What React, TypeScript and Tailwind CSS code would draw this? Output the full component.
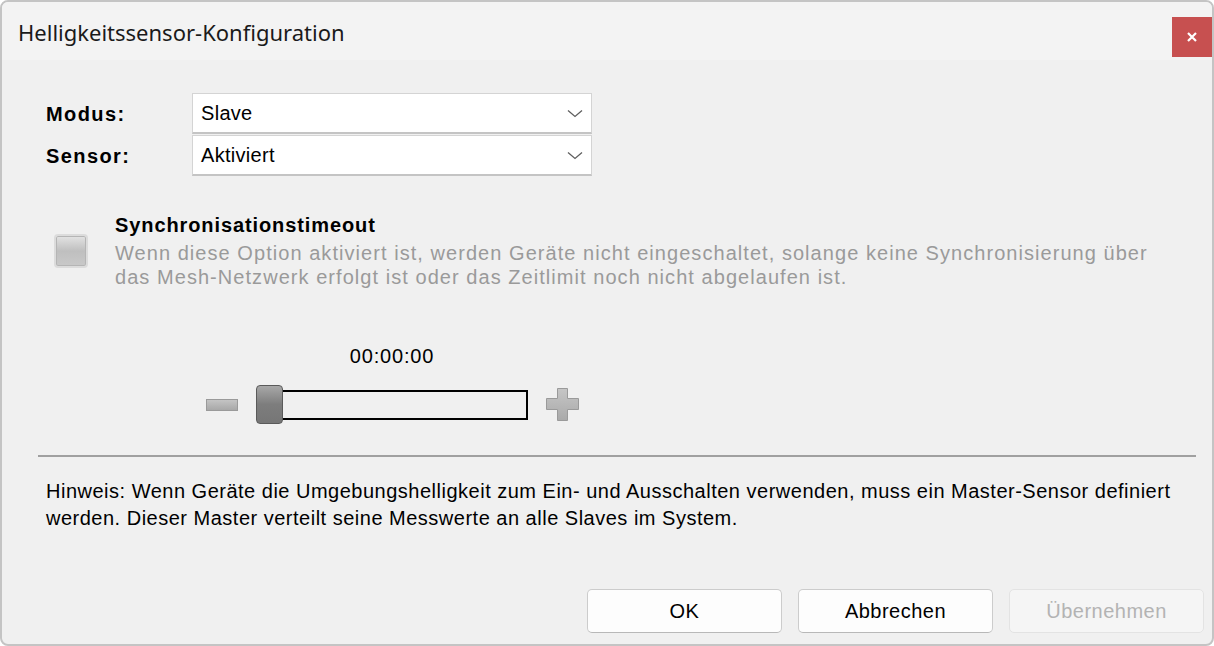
import { useState } from 'react';

const body = { fontFamily: '"Liberation Sans", Arial, sans-serif' };
const title = { fontFamily: '"Noto Sans", "Open Sans", sans-serif' };

function Chevron() {
  return (
    <svg width="16" height="9" viewBox="0 0 16 9" fill="none" stroke="#5f5f5f" strokeWidth="1.3">
      <path d="M1 1.5L8 7.5L15 1.5" />
    </svg>
  );
}

function Select({ value }: { value: string }) {
  return (
    <div className="flex h-[41px] w-[400px] items-center justify-between border border-[#d4d4d4] border-b-2 border-b-[#c4c4c4] bg-white pl-[8px] pr-[8px] text-[20px] tracking-[0.3px] text-black">
      <span>{value}</span>
      <Chevron />
    </div>
  );
}

function Button({ label, disabled }: { label: string; disabled?: boolean }) {
  return (
    <button
      className={
        disabled
          ? 'h-[44px] w-[195px] rounded-[5px] border border-[#e3e3e3] bg-[#f5f5f5] text-[20px] tracking-[0.5px] text-[#b3b3b3]'
          : 'h-[44px] w-[195px] rounded-[5px] border border-[#cccccc] border-b-[#b8b8b8] bg-[#fdfdfd] text-[20px] tracking-[0.5px] text-black'
      }
    >
      {label}
    </button>
  );
}

function PlusIcon() {
  return (
    <svg width="33" height="33" viewBox="0 0 33 33">
      <defs>
        <linearGradient id="plusFill" x1="0" y1="0" x2="0" y2="1">
          <stop offset="0" stopColor="#c6c6c6" />
          <stop offset="1" stopColor="#a9a9a9" />
        </linearGradient>
      </defs>
      <path
        d="M11.5 0.5H21.5V10.5H32.5V21.5H21.5V32.5H11.5V21.5H0.5V10.5H11.5Z"
        fill="url(#plusFill)"
        stroke="#9a9a9a"
        strokeWidth="1"
      />
    </svg>
  );
}

export default function App() {
  const [checked] = useState(false);

  return (
    <div className="h-[646px] w-[1214px] bg-white" style={body}>
      <div className="flex h-full flex-col overflow-hidden rounded-[8px] border-2 border-[#c4c4c4] bg-[#f0f0f0]">
        {/* title bar */}
        <div className="flex h-[58px] shrink-0 items-start justify-between bg-[#f3f3f3]">
          <div className="mt-[15px] pl-[16px] text-[22px] leading-[30px] text-[#1a1a1a]" style={title}>
            Helligkeitssensor-Konfiguration
          </div>
          <button className="mt-[15px] flex h-[40px] w-[40px] items-center justify-center bg-[#c75050] text-white">
            <svg width="12" height="12" viewBox="0 0 12 12" stroke="white" strokeWidth="2.2">
              <path d="M2 2L10 10M10 2L2 10" />
            </svg>
          </button>
        </div>

        {/* form */}
        <div className="mt-[33px] flex flex-col gap-[1px] pl-[44px]">
          <div className="flex items-center">
            <span className="w-[146px] text-[20px] font-bold tracking-[1.4px] text-black">Modus:</span>
            <Select value="Slave" />
          </div>
          <div className="flex items-center">
            <span className="w-[146px] text-[20px] font-bold tracking-[1.4px] text-black">Sensor:</span>
            <Select value="Aktiviert" />
          </div>
        </div>

        {/* sync timeout */}
        <div className="mt-[37px] flex items-center pl-[52px]">
          <div className="mr-[27px] h-[34px] w-[34px] rounded-[4px] border-2 border-[#dcdcdc] bg-gradient-to-b from-[#e4e4e4] via-[#bfbfbf] to-[#c9c9c9] shadow-[inset_0_0_0_1px_#b5b5b5]">
            {checked && <span />}
          </div>
          <div className="flex flex-col">
            <div className="text-[20px] font-bold leading-[24px] tracking-[0.9px] text-black">Synchronisationstimeout</div>
            <p className="mt-[4px] w-[1060px] text-[20px] leading-[24px] tracking-[1.05px] text-[#9a9a9a]">
              Wenn diese Option aktiviert ist, werden Geräte nicht eingeschaltet, solange keine Synchronisierung über das
              Mesh-Netzwerk erfolgt ist oder das Zeitlimit noch nicht abgelaufen ist.
            </p>
          </div>
        </div>

        {/* slider */}
        <div className="mt-[56px] flex w-[780px] flex-col items-center">
          <div className="text-[20px] leading-[22px] tracking-[0.8px] text-black">00:00:00</div>
          <div className="mt-[18px] flex items-center">
            <div className="h-[12px] w-[32px] border border-[#9a9a9a] bg-gradient-to-b from-[#c4c4c4] to-[#a8a8a8]" />
            <div className="ml-[18px] flex h-[39px] w-[272px] items-center">
              <div className="h-[39px] w-[27px] rounded-[4px] border border-[#5a5a5a] bg-gradient-to-b from-[#a8a8a8] via-[#7d7d7d] to-[#767676]" />
              <div className="h-[30px] flex-1 border-2 border-l-0 border-black bg-[#f0f0f0]" />
            </div>
            <div className="ml-[18px]">
              <PlusIcon />
            </div>
          </div>
        </div>

        {/* separator */}
        <div className="ml-[36px] mr-[16px] mt-[31px] h-[2px] bg-[#a0a0a0]" />

        {/* hint */}
        <p className="ml-[44px] mt-[21px] w-[1150px] text-[20px] leading-[27px] tracking-[0.5px] text-black">
          Hinweis: Wenn Geräte die Umgebungshelligkeit zum Ein- und Ausschalten verwenden, muss ein Master-Sensor definiert
          werden. Dieser Master verteilt seine Messwerte an alle Slaves im System.
        </p>

        {/* buttons */}
        <div className="mt-auto mb-[11px] flex justify-end gap-[16px] pr-[8px]">
          <Button label="OK" />
          <Button label="Abbrechen" />
          <Button label="Übernehmen" disabled />
        </div>
      </div>
    </div>
  );
}
